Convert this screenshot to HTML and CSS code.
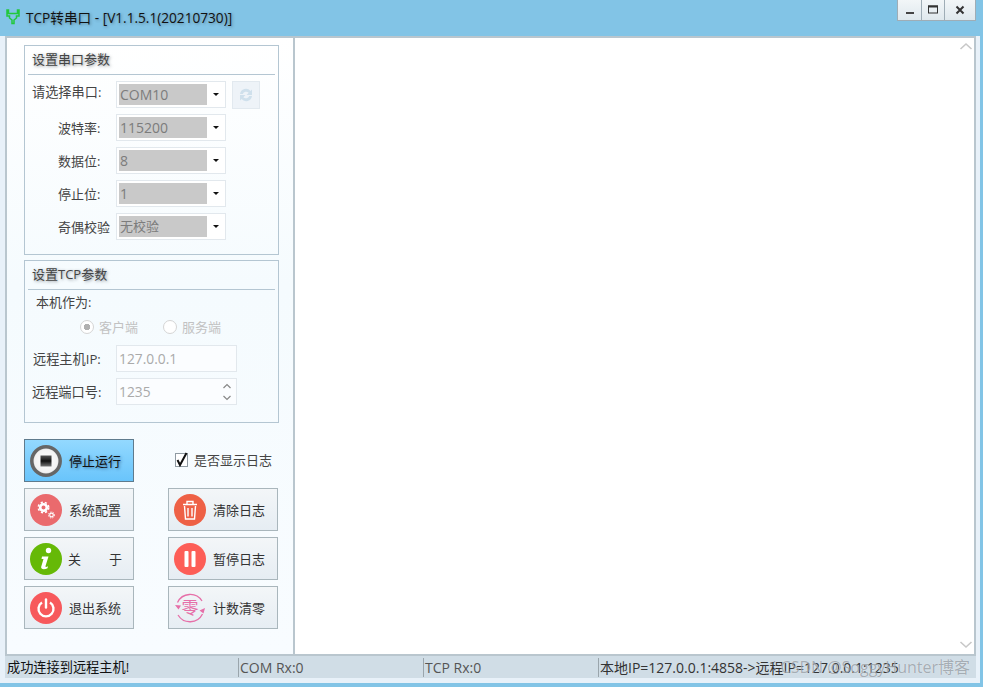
FILE: index.html
```html
<!DOCTYPE html>
<html lang="zh">
<head>
<meta charset="utf-8">
<title>TCP转串口</title>
<link rel="stylesheet" href="styles.css">
</head>
<body>
<div class="window">
  <header class="titlebar">
    <svg class="appicon" width="16" height="16" viewBox="0 0 16 16"><path d="M2 1v6h2.500v2l2.500 2v3.500h2V11l2.500-2V7H14V1h-1.500v3.500h-9V1z" fill="none" stroke="#22c83c" stroke-width="1.500"/></svg>
    <span class="apptitle">TCP转串口 - [V1.1.5.1(20210730)]</span>
    <div class="winbtns">
      <span class="winbtn"><svg width="12" height="12" viewBox="0 0 12 12"><rect x="2" y="8" width="8" height="2" fill="#444"/></svg></span>
      <span class="winbtn"><svg width="12" height="12" viewBox="0 0 12 12"><rect x="1.500" y="2" width="9" height="7" fill="none" stroke="#333" stroke-width="1"/><rect x="1" y="1.500" width="10" height="2" fill="#333"/></svg></span>
      <span class="winbtn close"><svg width="12" height="12" viewBox="0 0 12 12"><path d="M2.500 2.500l7 7M9.500 2.500l-7 7" stroke="#333" stroke-width="2"/></svg></span>
    </div>
  </header>
  <div class="client">
    <div class="main">
      <aside class="left">
        <section class="group serial">
          <h2 class="grouptitle">设置串口参数</h2>
          <div class="row">
            <label class="lbl lbl-first">请选择串口:</label>
            <div class="select"><span class="selval">COM10</span><i class="caret"></i></div>
            <span class="refresh"><svg width="18" height="18" viewBox="0 0 18 18"><path d="M3 8a6 6 0 0 1 10.500-3L15 3.500V9H9.500l2.200-2.200A3.500 3.500 0 0 0 5.800 8zM15 10a6 6 0 0 1-10.500 3L3 14.500V9h5.500l-2.200 2.200A3.500 3.500 0 0 0 12.200 10z" fill="#cfe0ec"/></svg></span>
          </div>
          <div class="row">
            <label class="lbl lbl-in">波特率:</label>
            <div class="select"><span class="selval">115200</span><i class="caret"></i></div>
          </div>
          <div class="row">
            <label class="lbl lbl-in">数据位:</label>
            <div class="select"><span class="selval">8</span><i class="caret"></i></div>
          </div>
          <div class="row">
            <label class="lbl lbl-in">停止位:</label>
            <div class="select"><span class="selval">1</span><i class="caret"></i></div>
          </div>
          <div class="row">
            <label class="lbl lbl-in">奇偶校验</label>
            <div class="select"><span class="selval selcn">无校验</span><i class="caret"></i></div>
          </div>
        </section>

        <section class="group tcp">
          <h2 class="grouptitle">设置TCP参数</h2>
          <div class="role">本机作为:</div>
          <div class="radios">
            <span class="radio"><i class="dot on"></i>客户端</span>
            <span class="radio"><i class="dot"></i>服务端</span>
          </div>
          <div class="row">
            <label class="lbl lbl-tcp lbl-ip">远程主机IP:</label>
            <div class="input">127.0.0.1</div>
          </div>
          <div class="row">
            <label class="lbl lbl-tcp">远程端口号:</label>
            <div class="input">1235
              <svg class="spin" width="10" height="22" viewBox="0 0 10 22"><path d="M1.500 7l3.500-3.500L8.500 7M1.500 15l3.500 3.500L8.500 15" fill="none" stroke="#888" stroke-width="1.200"/></svg>
            </div>
          </div>
        </section>

        <div class="actions">
          <button class="btn stop" type="button">
            <svg class="ico" width="32" height="32" viewBox="0 0 32 32"><defs><radialGradient id="g1"><stop offset="0" stop-color="#fff"/><stop offset="0.800" stop-color="#f2f2f2"/><stop offset="1" stop-color="#ccc"/></radialGradient><linearGradient id="g2" x1="0" y1="0" x2="0" y2="1"><stop offset="0" stop-color="#555"/><stop offset="0.500" stop-color="#111"/><stop offset="1" stop-color="#777"/></linearGradient></defs><circle cx="16" cy="16" r="14.200" fill="url(#g1)" stroke="#666" stroke-width="3.500"/><rect x="10.500" y="10.500" width="11" height="11" fill="url(#g2)"/></svg>
            <span>停止运行</span>
          </button>
          <label class="check">
            <svg width="15" height="16" viewBox="0 0 15 16"><rect x="0.500" y="1.500" width="12" height="13" fill="#fff" stroke="#8f9aa2"/><path d="M2.500 8l2.500 5 6.500-12" fill="none" stroke="#111" stroke-width="2"/></svg>
            <span>是否显示日志</span>
          </label>

          <button class="btn" type="button">
            <svg class="ico" width="32" height="32" viewBox="0 0 32 32"><circle cx="16" cy="16" r="16" fill="#ea6a6d"/><circle cx="13.500" cy="13.500" r="3.300" fill="none" stroke="#fff" stroke-width="2.600"/><circle cx="13.500" cy="13.500" r="5.200" fill="none" stroke="#fff" stroke-width="1.600" stroke-dasharray="2.200 2"/><circle cx="21.500" cy="21" r="1.800" fill="none" stroke="#fff" stroke-width="1.200"/><circle cx="21.500" cy="21" r="3" fill="none" stroke="#fff" stroke-width="1" stroke-dasharray="1.300 1.200"/></svg>
            <span>系统配置</span>
          </button>
          <button class="btn" type="button">
            <svg class="ico" width="32" height="32" viewBox="0 0 32 32"><circle cx="16" cy="16" r="16" fill="#ee6045"/><path d="M9 10.500h14M13 10V7.500h6V10M10.500 12l1 13h9l1-13M14 14v8.500M18 14v8.500" fill="none" stroke="#fff" stroke-width="1.400"/></svg>
            <span>清除日志</span>
          </button>

          <button class="btn" type="button">
            <svg class="ico" width="32" height="32" viewBox="0 0 32 32"><circle cx="16" cy="16" r="16" fill="#66b907"/><circle cx="18.500" cy="7.500" r="2.700" fill="#fff"/><path d="M12 13.500h6.500l-3 9.500c-.3 1 .5 1.300 2.500.3l-.5 2c-3 1.500-7 1.300-6.300-1.500l2.300-7.800h-2z" fill="#fff"/></svg>
            <span class="spread"><span>关</span><span>于</span></span>
          </button>
          <button class="btn" type="button">
            <svg class="ico" width="32" height="32" viewBox="0 0 32 32"><circle cx="16" cy="16" r="16" fill="#fd5e57"/><rect x="10.500" y="8" width="4" height="16" rx="1" fill="#fff"/><rect x="17.500" y="8" width="4" height="16" rx="1" fill="#fff"/></svg>
            <span>暂停日志</span>
          </button>

          <button class="btn" type="button">
            <svg class="ico" width="32" height="32" viewBox="0 0 32 32"><circle cx="16" cy="16" r="16" fill="#f7595c"/><path d="M12 10.500a7.500 7.500 0 1 0 8 0" fill="none" stroke="#fff" stroke-width="2.400"/><path d="M16 7.500v8" stroke="#fff" stroke-width="2.400" stroke-linecap="round"/></svg>
            <span>退出系统</span>
          </button>
          <button class="btn" type="button">
            <svg class="ico" width="32" height="32" viewBox="0 0 32 32"><path d="M3.500 10.500A14 14 0 0 1 28 9M28.500 22A14 14 0 0 1 4 23" fill="none" stroke="#e66fa8" stroke-width="1.300"/><path d="M1 13l6 .5-2.500 4zM31 16l-1.500 5.500-4-3z" fill="#e66fa8"/><text class="zero" x="16" y="22" text-anchor="middle">零</text></svg>
            <span>计数清零</span>
          </button>
        </div>
      </aside>
      <div class="log">
        <svg class="chev" width="14" height="10" viewBox="0 0 14 10"><path d="M1.500 8L7 3l5.500 5" fill="none" stroke="#c8c8c8" stroke-width="1.600"/></svg>
        <svg class="chev" width="14" height="10" viewBox="0 0 14 10"><path d="M1.500 2L7 7l5.500-5" fill="none" stroke="#c8c8c8" stroke-width="1.600"/></svg>
      </div>
    </div>
    <footer class="status">
      <span class="cell c1">成功连接到远程主机!</span>
      <span class="cell c2">COM Rx:0</span>
      <span class="cell c3">TCP Rx:0</span>
      <span class="cell c4">本地IP=127.0.0.1:4858-&gt;远程IP=127.0.0.1:1235</span>
      <span class="mark">CSDN @SoggyHunter博客</span>
    </footer>
  </div>
</div>
</body>
</html>
```
FILE: styles.css
```css
* { box-sizing: border-box; }
html, body { margin: 0; padding: 0; }
body {
  width: 983px;
  height: 687px;
  overflow: hidden;
  font-family: "Open Sans", "Noto Sans CJK SC", sans-serif;
  font-size: 13px;
  color: #333;
}
.window {
  width: 983px;
  height: 687px;
  display: flex;
  flex-direction: column;
  background: #82c4e6;
}
.titlebar {
  height: 36px;
  flex: none;
  display: flex;
  align-items: flex-start;
  position: relative;
  padding-left: 5px;
}
.appicon { margin-top: 9px; }
.apptitle {
  margin: 7px 0 0 5px;
  line-height: 21px;
  font-size: 13.650px;
  color: #111;
  text-shadow: 1px 1px 3px rgba(40, 50, 60, .45);
}
.winbtns {
  margin-left: auto;
  margin-right: 7px;
  display: flex;
  height: 21px;
  border: 1px solid #9fadb6;
  border-top: 0;
  background: linear-gradient(#f2f6f8, #dfe8ed);
}
.winbtn {
  width: 23px;
  display: flex;
  align-items: center;
  justify-content: center;
  border-left: 1px solid #9fadb6;
}
.winbtn:first-child { border-left: 0; }
.winbtn.close { width: 31px; }
.client {
  flex: 1;
  min-height: 0;
  margin: 0 3px 4px 0;
  padding: 0 4px 5px 5px;
  background: #e8f1f9;
  display: flex;
  flex-direction: column;
}
.main {
  flex: 1;
  min-height: 0;
  display: flex;
  border: 2px solid #b9c6ce;
  border-bottom-width: 1px;
}
.left {
  width: 288px;
  flex: none;
  border-right: 2px solid #b9c6ce;
  padding: 7px 0 0 17px;
  background: linear-gradient(#fff, #f5fbfe 40%, #f8fcff);
}
.group {
  width: 255px;
  border: 1px solid #b4c6d2;
  padding: 0 3px;
}
.serial { height: 210px; }
.tcp { height: 163px; margin-top: 5px; }
.grouptitle {
  margin: 0;
  height: 29px;
  line-height: 26px;
  padding-left: 4px;
  font-size: 13px;
  font-weight: 400;
  color: #444;
  border-bottom: 1px solid #b4c6d2;
  text-shadow: 1px 1px 3px rgba(40, 50, 60, .5);
}
.row {
  display: flex;
  align-items: center;
  height: 27px;
  margin-top: 6px;
}
.lbl { width: 88px; flex: none; color: #444; }
.lbl-first { padding: 0 0 7px 4px; font-size: 13.200px; }
.lbl-in { padding-left: 30px; white-space: nowrap; }
.lbl-tcp { padding-left: 4px; white-space: nowrap; font-size: 13.200px; }
.lbl-ip { padding-left: 5px; }
.select {
  width: 110px;
  height: 27px;
  padding: 2px;
  display: flex;
  align-items: center;
  background: #fff;
  border: 1px solid #e2e8ed;
}
.selval {
  width: 88px;
  height: 21px;
  line-height: 21px;
  padding-left: 1px;
  font-size: 14px;
  background: #c9c9c9;
  color: #7c7c7c;
}
.selcn { font-size: 13px; }
.caret {
  margin-left: 6px;
  border: 3px solid transparent;
  border-top: 3px solid #111;
  border-bottom: 0;
}
.refresh {
  width: 28px;
  height: 28px;
  margin-left: 6px;
  display: flex;
  align-items: center;
  justify-content: center;
  background: #eef3f8;
  border: 1px solid #e2e9ef;
}
.role { margin: 3px 0 0 8px; line-height: 18px; color: #444; }
.radios {
  height: 18px;
  margin: 7px 0 0 52px;
  display: flex;
  gap: 25px;
  color: #c2c2c2;
}
.radio { display: flex; align-items: center; line-height: 18px; }
.dot {
  width: 14px;
  height: 14px;
  margin-right: 5px;
  border: 1px solid #d5d5d5;
  border-radius: 50%;
  background: #fff;
}
.dot.on { background: radial-gradient(#b0b0b0 0 3px, #fff 3.500px); }
.input {
  width: 121px;
  height: 27px;
  padding-left: 2px;
  line-height: 25px;
  font-size: 13.800px;
  color: #aaa;
  background: #fbfdff;
  border: 1px solid #e2e8ed;
  display: flex;
  align-items: center;
}
.spin { margin-left: auto; margin-right: 4px; }
.radios + .row { margin-top: 9px; }
.actions {
  margin-top: 16px;
  width: 254px;
  display: grid;
  grid-template-columns: 110px 110px;
  grid-auto-rows: 43px;
  column-gap: 34px;
  row-gap: 6px;
}
.btn {
  display: flex;
  align-items: center;
  margin: 0;
  padding: 0 0 0 5px;
  font: inherit;
  color: #333;
  border: 1px solid #a9b6bc;
  background: linear-gradient(#f3f6f8, #e6edf3);
}
.btn > span { margin-left: 7px; white-space: nowrap; }
.ico { flex: none; }
.stop {
  border-color: #5f7b8d;
  background: linear-gradient(#93d9ff, #69c4fb);
  color: #111;
  text-shadow: 1px 1px 3px rgba(20, 50, 90, .6);
}
.btn > .spread {
  display: flex;
  justify-content: space-between;
  width: 54px;
  margin-left: 6px;
}
.zero { font-size: 17px; fill: #e66fa8; font-family: "Noto Sans CJK SC", sans-serif; }
.check {
  display: flex;
  align-items: center;
  gap: 4px;
  margin-left: -34px;
  padding: 0 0 2px 41px;
  white-space: nowrap;
  color: #444;
}
.log {
  flex: 1;
  background: #fff;
  display: flex;
  flex-direction: column;
  justify-content: space-between;
  align-items: flex-end;
  padding: 3px 1px 4px 0;
}
.status {
  height: 23px;
  flex: none;
  display: flex;
  align-items: center;
  position: relative;
  background: #d0dde6;
  border-top: 1px solid #b9c6ce;
  white-space: nowrap;
}
.cell {
  height: 19px;
  line-height: 19px;
  font-size: 14px;
  color: #333;
  padding-left: 1px;
  border-left: 1px solid #9aa5ac;
}
.c1 { width: 233px; border-left: 0; padding-left: 2px; font-size: 13.200px; color: #111; }
.c2 { width: 185px; color: #555; }
.c3 { width: 175px; color: #555; }
.c4 { flex: 1; }
.mark {
  position: absolute;
  right: 6px;
  top: 1px;
  line-height: 20px;
  font-size: 16px;
  color: rgba(95, 105, 115, .5);
  text-shadow: 0 0 1px rgba(255, 255, 255, .7);
}
```
